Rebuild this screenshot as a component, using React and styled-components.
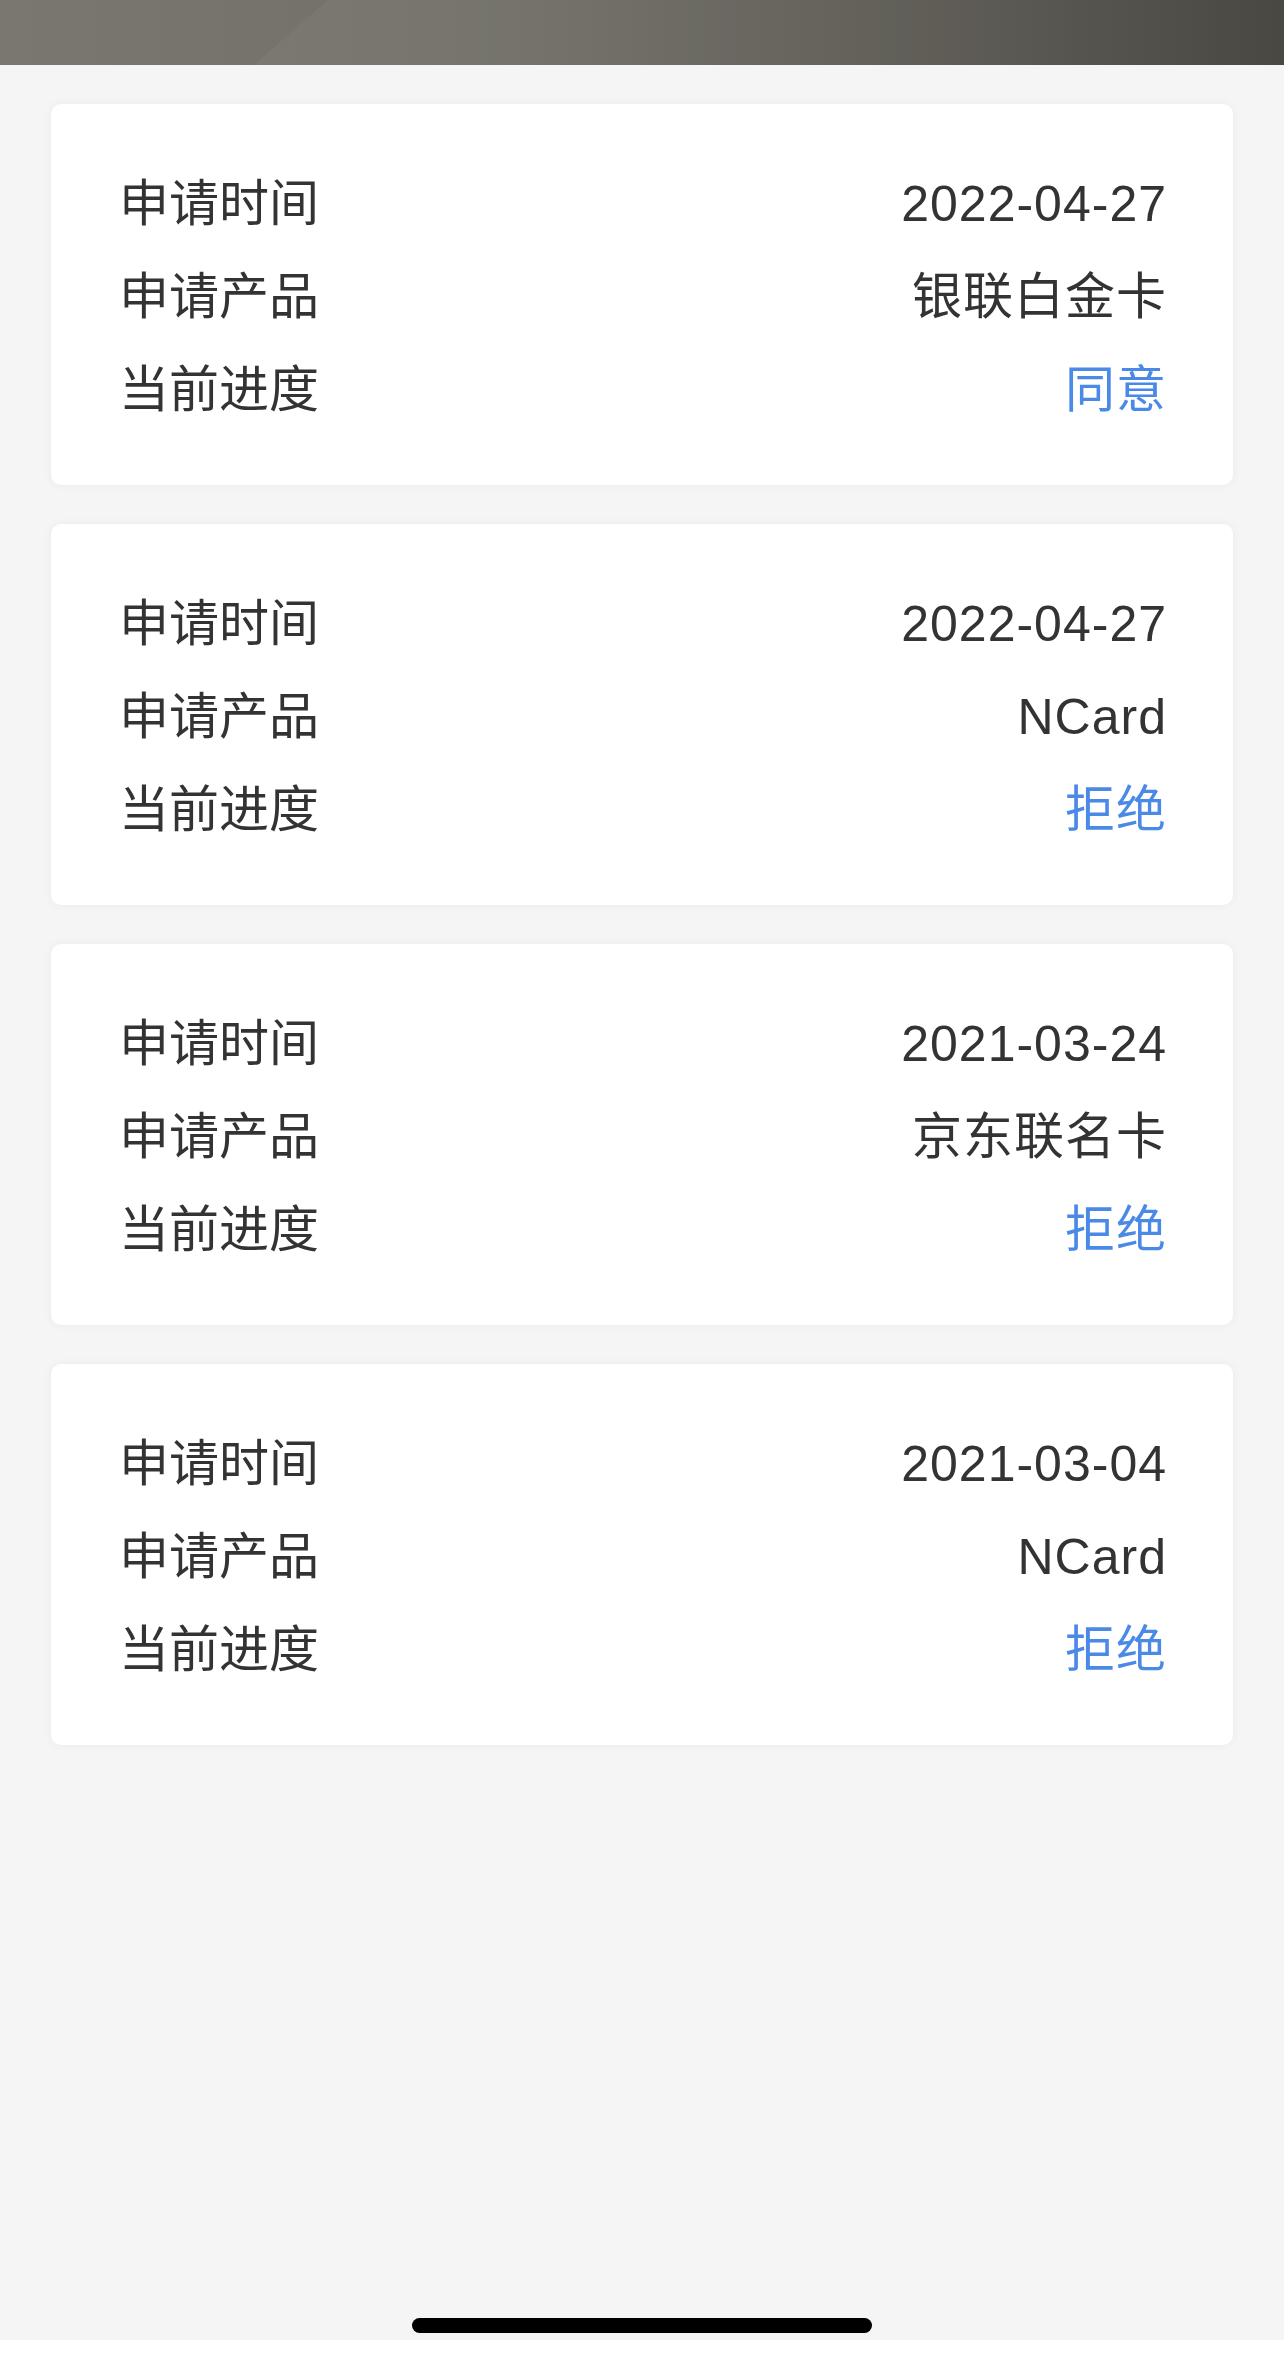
import styled, { createGlobalStyle } from "styled-components";

const GlobalStyle = createGlobalStyle`
  html, body {
    margin: 0;
    padding: 0;
    background: #ffffff;
  }
  * {
    box-sizing: border-box;
  }
`;

const records = [
  { date: "2022-04-27", product: "银联白金卡", status: "同意" },
  { date: "2022-04-27", product: "NCard", status: "拒绝" },
  { date: "2021-03-24", product: "京东联名卡", status: "拒绝" },
  { date: "2021-03-04", product: "NCard", status: "拒绝" },
];

export default function App() {
  return (
    <>
      <GlobalStyle />
      <Page>
        <Header />
        <List>
          {records.map((item, i) => (
            <Card key={i}>
              <Row>
                <Label>申请时间</Label>
                <Value>{item.date}</Value>
              </Row>
              <Row>
                <Label>申请产品</Label>
                <Value>{item.product}</Value>
              </Row>
              <Row>
                <Label>当前进度</Label>
                <Value $accent>{item.status}</Value>
              </Row>
            </Card>
          ))}
        </List>
        <HomeArea>
          <HomeBar />
        </HomeArea>
        <BottomStrip />
      </Page>
    </>
  );
}

const Page = styled.div`
  width: 1284px;
  height: 2357px;
  display: flex;
  flex-direction: column;
  background: #f5f5f5;
  font-family: "Liberation Sans", "Noto Sans CJK SC", sans-serif;
`;

const Header = styled.div`
  position: relative;
  height: 65px;
  flex-shrink: 0;
  overflow: hidden;
  background: linear-gradient(90deg, #7a776f 0%, #716f67 40%, #5f5d56 70%, #4a4843 100%);

  &::after {
    content: "";
    position: absolute;
    inset: 0;
    background: linear-gradient(90deg, rgba(255, 255, 255, 0.05), rgba(255, 255, 255, 0));
    clip-path: polygon(328px 0, 100% 0, 100% 100%, 254px 100%);
  }
`;

const List = styled.div`
  flex: 1;
  display: flex;
  flex-direction: column;
  gap: 39px;
  padding: 39px 51px 0;
`;

const Card = styled.div`
  background: #ffffff;
  border-radius: 10px;
  box-shadow: 0 0 10px rgba(0, 0, 0, 0.05);
  padding: 54px 66px 48px 68px;
  display: flex;
  flex-direction: column;
`;

const Row = styled.div`
  display: flex;
  justify-content: space-between;
  align-items: center;
  height: 93px;
  font-size: 50px;
  line-height: 93px;
`;

const Label = styled.span`
  color: #333333;
`;

const Value = styled.span`
  letter-spacing: 1px;
  color: ${(p) => (p.$accent ? "#4a89e6" : "#333333")};
`;

const HomeArea = styled.div`
  flex-shrink: 0;
  display: flex;
  justify-content: center;
  padding-bottom: 7px;
`;

const HomeBar = styled.div`
  width: 460px;
  height: 15px;
  border-radius: 8px;
  background: #000000;
`;

const BottomStrip = styled.div`
  height: 17px;
  flex-shrink: 0;
  background: #ffffff;
`;
